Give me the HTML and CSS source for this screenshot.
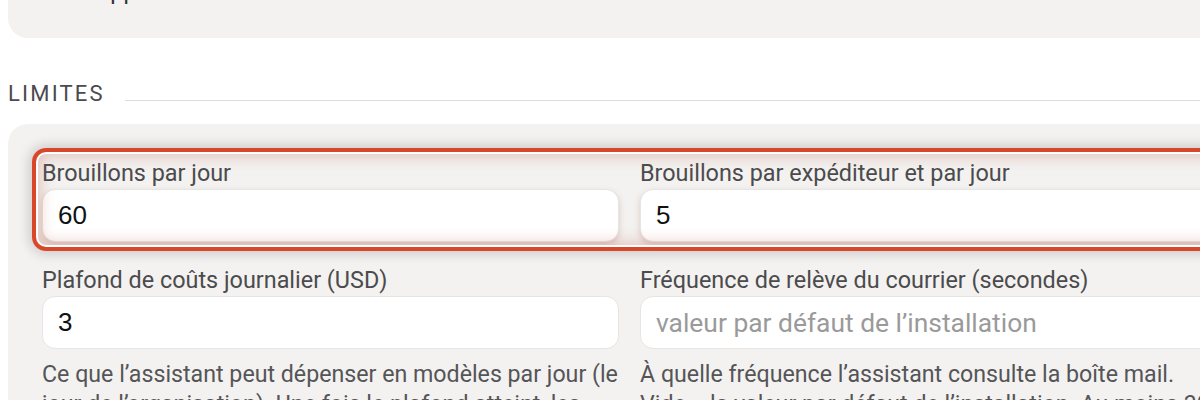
FILE: index.html
```html
<!DOCTYPE html>
<html lang="fr">
<head>
<meta charset="utf-8">
<title>Limites</title>
<link rel="stylesheet" href="styles.css">
</head>
<body>
<div class="page">
  <section class="card card-top">
    <p class="top-line">Approuver les brouillons avant l’envoi</p>
  </section>

  <div class="section-head">
    <h2 class="section-title">LIMITES</h2>
    <div class="section-rule"></div>
  </div>

  <section class="card card-limits">
    <div class="grid-row highlight">
      <div class="field">
        <label class="field-label">Brouillons par jour</label>
        <div class="input"><span class="value">60</span></div>
      </div>
      <div class="field">
        <label class="field-label">Brouillons par expéditeur et par jour</label>
        <div class="input"><span class="value">5</span></div>
      </div>
    </div>
    <div class="grid-row">
      <div class="field">
        <label class="field-label">Plafond de coûts journalier (USD)</label>
        <div class="input"><span class="value">3</span></div>
        <p class="help">Ce que l’assistant peut dépenser en modèles par jour (le jour de l’organisation). Une fois le plafond atteint, les brouillons sont suspendus.</p>
      </div>
      <div class="field">
        <label class="field-label">Fréquence de relève du courrier (secondes)</label>
        <div class="input"><span class="placeholder">valeur par défaut de l’installation</span></div>
        <p class="help">À quelle fréquence l’assistant consulte la boîte mail. Vide = la valeur par défaut de l’installation. Au moins 30 secondes.</p>
      </div>
    </div>
  </section>
</div>
</body>
</html>
```

FILE: styles.css
```css
html, body {
  margin: 0;
  padding: 0;
  background: #ffffff;
  overflow: hidden;
}

body {
  font-family: Roboto, "Noto Sans", sans-serif;
  color: #4a4a4c;
}

.page {
  width: 1243px;
  padding: 0 8px;
}

.card {
  background: #f3f2f0;
}

.card-top {
  margin-top: -42px;
  padding: 20px 35px 34px;
  border-radius: 0 0 20px 20px;
}

.top-line {
  margin: 0;
  padding-left: 52px;
  font-size: 23.4px;
  line-height: 26px;
  color: #333;
}

.section-head {
  display: flex;
  align-items: flex-end;
  gap: 20px;
  margin-top: 44px;
}

.section-title {
  margin: 0;
  font-size: 22px;
  line-height: 24px;
  font-weight: 400;
  letter-spacing: 0.1em;
  color: #4a4a50;
}

.section-rule {
  flex: 1;
  height: 0;
  border-top: 1px solid #dcdcdc;
  margin-bottom: 5px;
}

.card-limits {
  margin-top: 18px;
  padding: 36px 35px 30px 34px;
  border-radius: 20px 20px 0 0;
}

.grid-row {
  display: grid;
  grid-template-columns: 577px 577px;
  column-gap: 21px;
}

.grid-row + .grid-row {
  margin-top: 25px;
}

.field {
  display: flex;
  flex-direction: column;
  gap: 3px;
}

.field-label {
  font-size: 23.4px;
  line-height: 26px;
  color: #4b4b4d;
}

.input {
  height: 53px;
  box-sizing: border-box;
  display: flex;
  align-items: center;
  padding: 0 15px;
  background: #ffffff;
  border: 1px solid #e6e5e3;
  border-radius: 13px;
}

.value {
  font-family: "Liberation Sans", Arial, sans-serif;
  font-size: 26px;
  color: #111111;
}

.placeholder {
  font-size: 26.4px;
  color: #9a9a9a;
}

.help {
  margin: 7px 0 0;
  font-size: 23.2px;
  line-height: 30px;
  color: #555558;
}

.highlight {
  position: relative;
}

.highlight .input {
  box-shadow: 0 3px 6px rgba(170, 90, 75, 0.28);
}

.highlight::after {
  content: "";
  position: absolute;
  top: -12px;
  left: -10px;
  right: -10px;
  bottom: -9px;
  border: 4px solid #d9472b;
  border-radius: 14px;
  box-shadow:
    inset 0 0 0 2px #ffffff,
    inset 0 0 14px 5px rgba(190, 95, 75, 0.3),
    0 0 12px 3px rgba(0, 0, 0, 0.16);
  pointer-events: none;
}
```
